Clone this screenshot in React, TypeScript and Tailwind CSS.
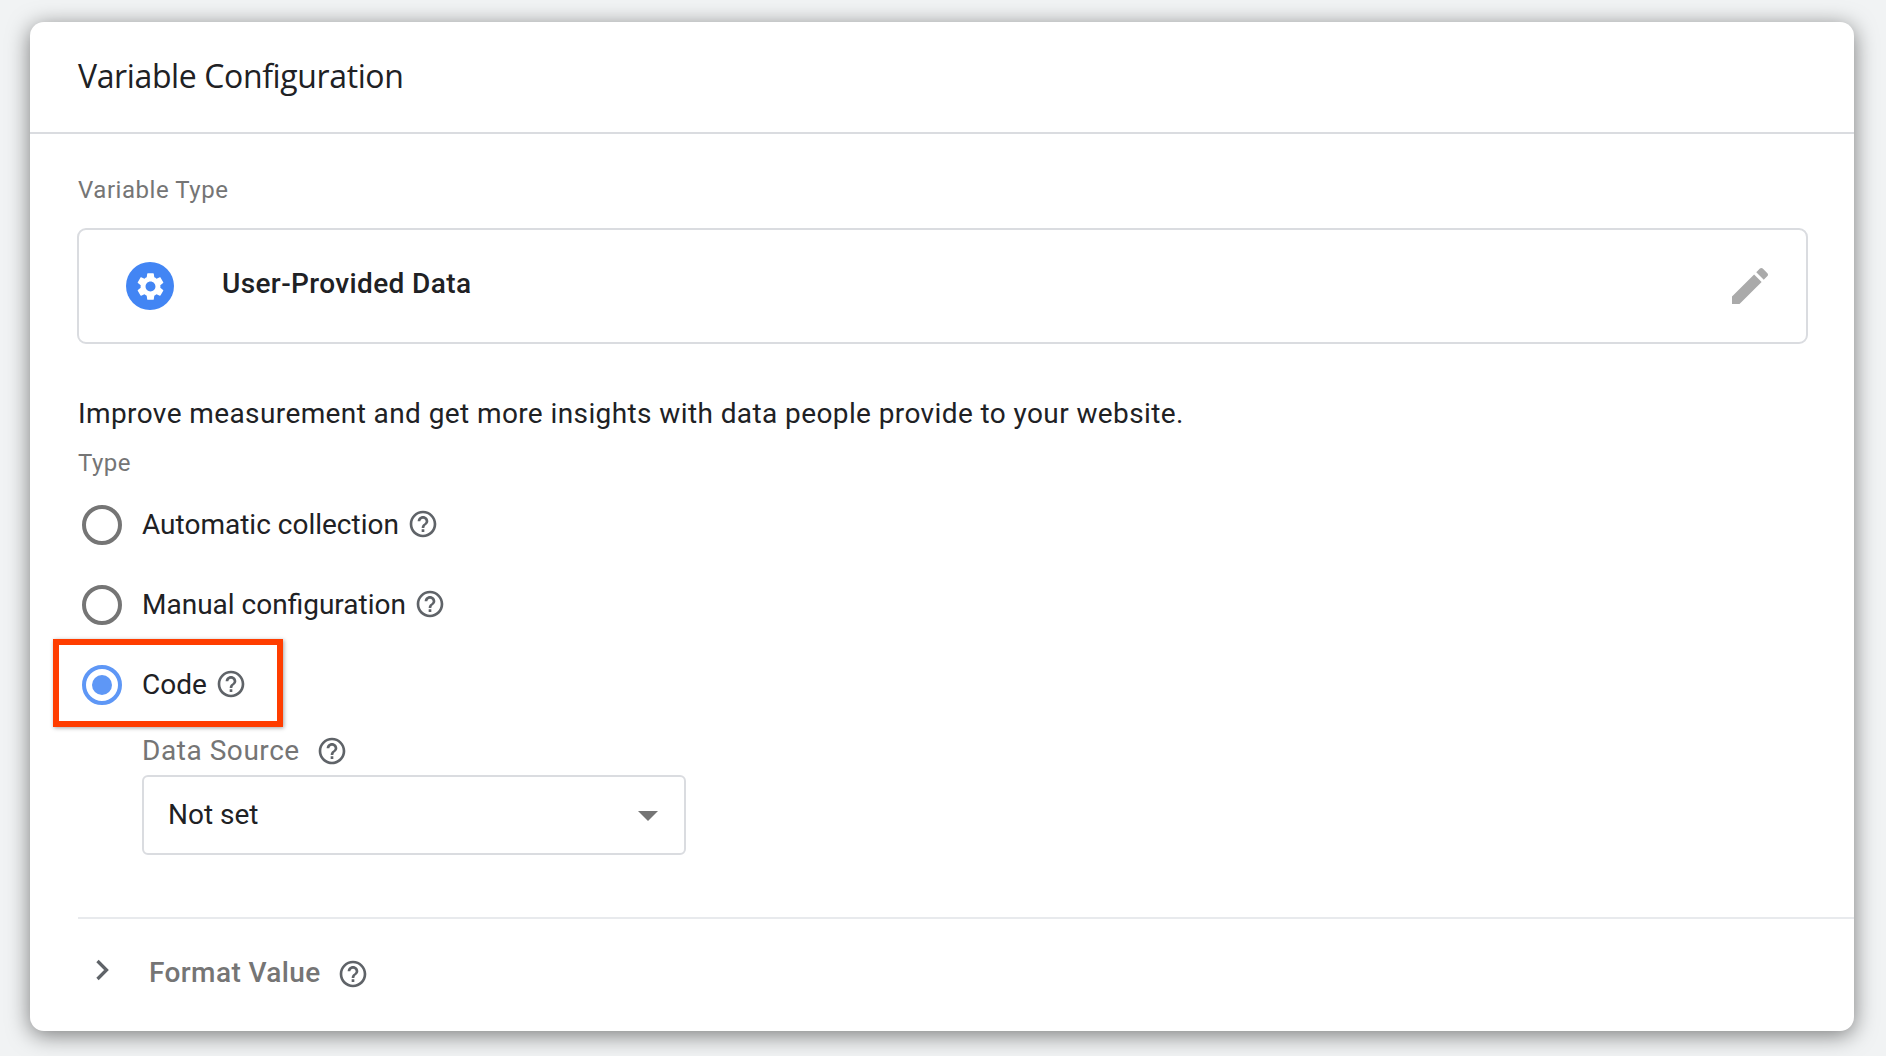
const HELP =
	"M11 18h2v-2h-2v2zm1-16C6.48 2 2 6.48 2 12s4.48 10 10 10 10-4.48 10-10S17.52 2 12 2zm0 18c-4.41 0-8-3.59-8-8s3.59-8 8-8 8 3.59 8 8-3.59 8-8 8zm0-14c-2.21 0-4 1.79-4 4h2c0-1.1.9-2 2-2s2 .9 2 2c0 2-3 1.75-3 5h2c0-2.25 3-2.5 3-5 0-2.21-1.79-4-4-4z";
const GEAR =
	"M19.14 12.94c.04-.3.06-.61.06-.94 0-.32-.02-.64-.07-.94l2.03-1.58c.18-.14.23-.41.12-.61l-1.92-3.32c-.12-.22-.37-.29-.59-.22l-2.39.96c-.5-.38-1.03-.7-1.62-.94l-.36-2.54c-.04-.24-.24-.41-.48-.41h-3.84c-.24 0-.43.17-.47.41l-.36 2.54c-.59.24-1.13.57-1.62.94l-2.39-.96c-.22-.08-.47 0-.59.22L2.74 8.87c-.12.21-.08.47.12.61l2.03 1.58c-.05.3-.09.63-.09.94s.02.64.07.94l-2.03 1.58c-.18.14-.23.41-.12.61l1.92 3.32c.12.22.37.29.59.22l2.39-.96c.5.38 1.03.7 1.62.94l.36 2.54c.05.24.24.41.48.41h3.84c.24 0 .44-.17.47-.41l.36-2.54c.59-.24 1.13-.56 1.62-.94l2.39.96c.22.08.47 0 .59-.22l1.92-3.32c.12-.22.07-.47-.12-.61l-2.01-1.58zM12 15.6c-1.98 0-3.6-1.62-3.6-3.6s1.62-3.6 3.6-3.6 3.6 1.62 3.6 3.6-1.62 3.6-3.6 3.6z";
const PENCIL =
	"M3 17.25V21h3.75L17.81 9.94l-3.75-3.75L3 17.25zM20.71 7.04c.39-.39.39-1.02 0-1.41l-2.34-2.34c-.39-.39-1.02-.39-1.41 0l-1.83 1.83 3.75 3.75 1.83-1.83z";

function HelpIcon({ className }: { className?: string }) {
	return (
		<svg viewBox="0 0 24 24" className={`w-[32px] h-[32px] shrink-0 fill-[#5f6368] ${className ?? ""}`}>
			<path d={HELP} />
		</svg>
	);
}

function Radio({ checked }: { checked?: boolean }) {
	if (checked) {
		return (
			<div className="w-[40px] h-[40px] rounded-full border-[4px] border-[#5e97f6] flex items-center justify-center">
				<div className="w-[20px] h-[20px] rounded-full bg-[#5e97f6]" />
			</div>
		);
	}
	return <div className="w-[40px] h-[40px] rounded-full border-[4px] border-[#757575]" />;
}

export default function App() {
	return (
		<div className="w-[1886px] h-[1056px] overflow-hidden bg-[#f1f3f4] pt-[22px] pl-[30px] font-['Roboto',sans-serif]">
			<div className="w-[1824px] h-[1009px] bg-white rounded-[14px] shadow-[0_4px_22px_rgba(0,0,0,0.5)]">
				<div className="h-[112px] border-b-2 border-[#dadce0] pl-[48px] flex items-center">
					<h1 className="text-[32px] font-normal text-[#202124] font-['Open_Sans',sans-serif] tracking-[-0.38px] -mt-[3px]">
						Variable Configuration
					</h1>
				</div>
				<div className="pl-[48px]">
					<div className="mt-[41px] h-[30px] flex items-center text-[24px] text-[#757575] tracking-[0.55px]">
						Variable Type
					</div>
					<div className="mt-[23px] -ml-px w-[1731px] h-[116px] border-2 border-[#dadce0] rounded-[9px] flex items-center pl-[47px] pr-[32px]">
						<div className="w-[48px] h-[48px] rounded-full bg-[#4285f4] flex items-center justify-center">
							<svg viewBox="0 0 24 24" className="w-[33px] h-[33px] fill-white">
								<path d={GEAR} />
							</svg>
						</div>
						<div className="ml-[48px] text-[28px] font-medium text-[#202124] -mt-[5px] tracking-[0.38px]">
							User-Provided Data
						</div>
						<svg viewBox="0 0 24 24" className="ml-auto w-[48px] h-[48px] fill-[#aaaaaa]">
							<path d={PENCIL} />
						</svg>
					</div>
					<p className="mt-[52px] h-[36px] flex items-center text-[28px] text-[#202124] tracking-[0.4px]">
						Improve measurement and get more insights with data people provide to your website.
					</p>
					<div className="mt-[16px] h-[30px] flex items-center text-[24px] text-[#757575] tracking-[0.5px]">
						Type
					</div>
					<div className="mt-[7px]">
						<div className="h-[80px] flex items-center pl-[4px]">
							<Radio />
							<span className="ml-[20px] text-[28px] text-[#202124]">Automatic collection</span>
							<HelpIcon className="ml-[8px] -mt-[3px]" />
						</div>
						<div className="h-[80px] flex items-center pl-[4px]">
							<Radio />
							<span className="ml-[20px] text-[28px] text-[#202124]">Manual configuration</span>
							<HelpIcon className="ml-[8px] -mt-[3px]" />
						</div>
						<div className="relative h-[80px] flex items-center pl-[4px]">
							<Radio checked />
							<span className="ml-[20px] text-[28px] text-[#202124]">Code</span>
							<HelpIcon className="ml-[8px] -mt-[3px]" />
							<div className="absolute -left-[25px] -top-[6px] w-[230px] h-[88px] border-[6px] border-[#ff3d00] shadow-[1px_1px_4px_rgba(0,0,0,0.35)]" />
						</div>
					</div>
					<div className="mt-[11px] ml-[64px] h-[30px] flex items-center text-[28px] text-[#757575] tracking-[0.55px]">
						Data Source
						<HelpIcon className="ml-[16px]" />
					</div>
					<div className="mt-[9px] ml-[64px] w-[544px] h-[80px] border-2 border-[#dadce0] rounded-[6px] flex items-center pl-[24px] pr-[26px]">
						<span className="text-[28px] text-[#202124]">Not set</span>
						<div className="ml-auto mt-[2px] w-0 h-0 border-x-[10px] border-x-transparent border-t-[10px] border-t-[#757575]" />
					</div>
					<div className="mt-[62px] border-t-2 border-[#e8eaed]" />
					<div className="h-[107px] flex items-center">
						<svg viewBox="0 0 24 24" className="ml-[6px] -mt-[6px] w-[36px] h-[36px] fill-none stroke-[#5f6368] stroke-[2.2]">
							<path d="M9 6l6 6-6 6" />
						</svg>
						<span className="ml-[29px] text-[28px] font-medium text-[#757575] tracking-[0.4px]">Format Value</span>
						<HelpIcon className="ml-[16px] mt-[2px]" />
					</div>
				</div>
			</div>
		</div>
	);
}
